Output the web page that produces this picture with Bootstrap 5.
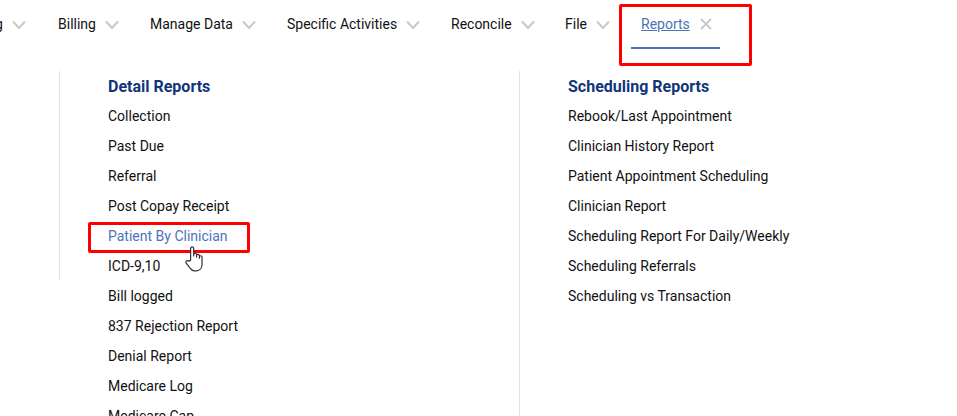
<!DOCTYPE html>
<html lang="en">
<head>
  <meta charset="UTF-8" />
  <meta name="viewport" content="width=device-width, initial-scale=1.0" />
  <title>Reports</title>
  <link href="https://cdn.jsdelivr.net/npm/bootstrap@5.3.0/dist/css/bootstrap.min.css" rel="stylesheet" />
  <style>
    html, body {
      height: 416px;
      overflow: hidden;
    }
    body {
      font-family: Roboto, "Liberation Sans", sans-serif;
      font-size: 14px;
      color: #111;
      background: #fff;
      position: relative;
    }
    .top-menu {
      height: 71px;
      padding-top: 14px;
      margin-left: -66px;
      white-space: nowrap;
    }
    .top-item {
      display: flex;
      align-items: flex-start;
      line-height: 20px;
      color: #111;
      text-decoration: none;
    }
    .top-item svg {
      margin-top: 6px;
      margin-left: 9px;
    }
    .item-sched { width: 124px; }
    .item-billing { width: 92px; }
    .item-manage { width: 137px; }
    .item-specific { width: 164px; }
    .item-reconcile { width: 114px; }
    .item-file { width: 76px; }
    .item-reports {
      color: #4a74b8;
      width: 89px;
      height: 35px;
      margin-left: -10px;
      padding-left: 10px;
      border-bottom: 2px solid #4a74b8;
    }
    .item-reports span { text-decoration: underline; }
    .item-reports svg { margin-left: 10px; margin-top: 4px; }
    .menu-rule {
      width: 1px;
      flex: none;
      background: #e3e3e3;
    }
    .rule-short {
      height: 209px;
      margin-left: 59px;
    }
    .menu-col {
      flex: none;
      width: 459px;
      padding-left: 48px;
    }
    .menu-head {
      font-size: 16px;
      font-weight: 700;
      line-height: 30px;
      color: #12357a;
      margin-top: 1px;
      margin-bottom: -1px;
    }
    .menu-link {
      display: block;
      line-height: 30px;
      color: #111;
      text-decoration: none;
    }
    .menu-link.is-hover { color: #4a74b8; }
    .mark-box {
      position: absolute;
      border: 3px solid #f00;
      border-radius: 2px;
    }
    .mark-reports { left: 619px; top: 4px; width: 133px; height: 62px; }
    .mark-patient { left: 88px; top: 222px; width: 162px; height: 31px; }
    .hand-cursor {
      position: absolute;
      left: 184px;
      top: 245px;
    }
  </style>
</head>
<body>
  <nav class="top-menu d-flex">
    <a class="top-item item-sched" href="#"><span>Scheduling</span><svg width="14" height="10" viewBox="0 0 14 10"><path d="M1 1.500 7 8l6-6.500" fill="none" stroke="#c9c9c9" stroke-width="2"/></svg></a>
    <a class="top-item item-billing" href="#"><span>Billing</span><svg width="14" height="10" viewBox="0 0 14 10"><path d="M1 1.500 7 8l6-6.500" fill="none" stroke="#c9c9c9" stroke-width="2"/></svg></a>
    <a class="top-item item-manage" href="#"><span>Manage Data</span><svg width="14" height="10" viewBox="0 0 14 10"><path d="M1 1.500 7 8l6-6.500" fill="none" stroke="#c9c9c9" stroke-width="2"/></svg></a>
    <a class="top-item item-specific" href="#"><span>Specific Activities</span><svg width="14" height="10" viewBox="0 0 14 10"><path d="M1 1.500 7 8l6-6.500" fill="none" stroke="#c9c9c9" stroke-width="2"/></svg></a>
    <a class="top-item item-reconcile" href="#"><span>Reconcile</span><svg width="14" height="10" viewBox="0 0 14 10"><path d="M1 1.500 7 8l6-6.500" fill="none" stroke="#c9c9c9" stroke-width="2"/></svg></a>
    <a class="top-item item-file" href="#"><span>File</span><svg width="14" height="10" viewBox="0 0 14 10"><path d="M1 1.500 7 8l6-6.500" fill="none" stroke="#c9c9c9" stroke-width="2"/></svg></a>
    <a class="top-item item-reports" href="#"><span>Reports</span><svg width="12" height="12" viewBox="0 0 12 12"><path d="M1 1l10 10M11 1 1 11" fill="none" stroke="#c9c9c9" stroke-width="2"/></svg></a>
  </nav>

  <div class="d-flex">
    <div class="menu-rule rule-short"></div>
    <div class="menu-col">
      <div class="menu-head">Detail Reports</div>
      <a class="menu-link" href="#">Collection</a>
      <a class="menu-link" href="#">Past Due</a>
      <a class="menu-link" href="#">Referral</a>
      <a class="menu-link" href="#">Post Copay Receipt</a>
      <a class="menu-link is-hover" href="#">Patient By Clinician</a>
      <a class="menu-link" href="#">ICD-9,10</a>
      <a class="menu-link" href="#">Bill logged</a>
      <a class="menu-link" href="#">837 Rejection Report</a>
      <a class="menu-link" href="#">Denial Report</a>
      <a class="menu-link" href="#">Medicare Log</a>
      <a class="menu-link" href="#">Medicare Cap</a>
    </div>
    <div class="menu-rule"></div>
    <div class="menu-col">
      <div class="menu-head">Scheduling Reports</div>
      <a class="menu-link" href="#">Rebook/Last Appointment</a>
      <a class="menu-link" href="#">Clinician History Report</a>
      <a class="menu-link" href="#">Patient Appointment Scheduling</a>
      <a class="menu-link" href="#">Clinician Report</a>
      <a class="menu-link" href="#">Scheduling Report For Daily/Weekly</a>
      <a class="menu-link" href="#">Scheduling Referrals</a>
      <a class="menu-link" href="#">Scheduling vs Transaction</a>
    </div>
  </div>

  <div class="mark-box mark-reports"></div>
  <div class="mark-box mark-patient"></div>
  <svg class="hand-cursor" width="22" height="28" viewBox="0 0 20 25.500">
    <path d="M6 14V3.200a1.400 1.400 0 0 1 2.800 0V10V8.800a1.300 1.300 0 0 1 2.600 0V11V9.800a1.300 1.300 0 0 1 2.600 0V12v-1a1.200 1.200 0 0 1 2.400 0v6.500c0 3.500-2 6-5 6H9.500c-2 0-3-1-4-2.500L2 16.500c-1-1.500.8-3 2.200-1.800z" fill="#fff" stroke="#333" stroke-width="1.100" stroke-linejoin="round"/>
  </svg>

  <script src="https://cdn.jsdelivr.net/npm/bootstrap@5.3.0/dist/js/bootstrap.bundle.min.js"></script>
</body>
</html>
